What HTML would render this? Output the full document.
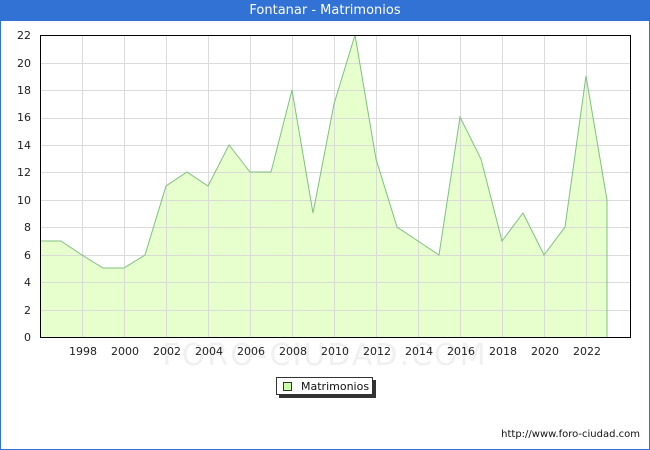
<!DOCTYPE html>
<html><head><style>
body{margin:0;width:650px;height:450px;overflow:hidden;font-family:"DejaVu Sans","Liberation Sans",sans-serif;}
.frame{position:absolute;left:0;top:0;width:648px;height:448px;border:1px solid #3272d4;background:#fff}
.title{position:absolute;left:0;top:0;width:650px;height:21px;background:#3272d4;color:#fff;font-size:13px;text-align:center;line-height:21px}
</style></head><body>
<div class="frame"></div>
<div class="title">Fontanar - Matrimonios</div>
<svg width="650" height="450" style="position:absolute;left:0;top:0" font-family="DejaVu Sans, Liberation Sans, sans-serif" font-size="11">
<polygon fill="#e6ffcc" stroke="none" points="40,337 40,241 61,241 82,255 103,268 124,268 145,255 166,186 187,172 208,186 229,145 250,172 271,172 292,90 313,213 334,104 355,35 376,159 397,227 418,241 439,255 460,117 481,159 502,241 523,213 544,255 565,227 586,76 607,200 607,337"/>
<text x="325" y="365" font-size="30" fill="#f0f0f0" text-anchor="middle" letter-spacing="2">FORO-CIUDAD.COM</text>
<g stroke="#d8d8d8" stroke-width="1" opacity="0.9">
<line x1="40" x2="630" y1="310.5" y2="310.5"/><line x1="40" x2="630" y1="282.5" y2="282.5"/><line x1="40" x2="630" y1="255.5" y2="255.5"/><line x1="40" x2="630" y1="227.5" y2="227.5"/><line x1="40" x2="630" y1="200.5" y2="200.5"/><line x1="40" x2="630" y1="172.5" y2="172.5"/><line x1="40" x2="630" y1="145.5" y2="145.5"/><line x1="40" x2="630" y1="118.5" y2="118.5"/><line x1="40" x2="630" y1="90.5" y2="90.5"/><line x1="40" x2="630" y1="63.5" y2="63.5"/>
<line x1="82.5" x2="82.5" y1="35" y2="337"/><line x1="124.5" x2="124.5" y1="35" y2="337"/><line x1="166.5" x2="166.5" y1="35" y2="337"/><line x1="208.5" x2="208.5" y1="35" y2="337"/><line x1="250.5" x2="250.5" y1="35" y2="337"/><line x1="292.5" x2="292.5" y1="35" y2="337"/><line x1="334.5" x2="334.5" y1="35" y2="337"/><line x1="376.5" x2="376.5" y1="35" y2="337"/><line x1="418.5" x2="418.5" y1="35" y2="337"/><line x1="460.5" x2="460.5" y1="35" y2="337"/><line x1="502.5" x2="502.5" y1="35" y2="337"/><line x1="544.5" x2="544.5" y1="35" y2="337"/><line x1="586.5" x2="586.5" y1="35" y2="337"/>
</g>
<polyline fill="none" stroke="#80c080" stroke-width="1" points="40,241 61,241 82,255 103,268 124,268 145,255 166,186 187,172 208,186 229,145 250,172 271,172 292,90 313,213 334,104 355,35 376,159 397,227 418,241 439,255 460,117 481,159 502,241 523,213 544,255 565,227 586,76 607,200 607,337"/>
<rect x="40.5" y="35.5" width="590" height="302" fill="none" stroke="#000" stroke-width="1"/>
<g text-anchor="end" fill="#222">
<text x="31" y="341">0</text><text x="31" y="314">2</text><text x="31" y="286">4</text><text x="31" y="259">6</text><text x="31" y="231">8</text><text x="31" y="204">10</text><text x="31" y="176">12</text><text x="31" y="149">14</text><text x="31" y="121">16</text><text x="31" y="94">18</text><text x="31" y="67">20</text><text x="31" y="39">22</text>
</g>
<g text-anchor="middle" fill="#222">
<text x="83" y="355">1998</text><text x="125" y="355">2000</text><text x="167" y="355">2002</text><text x="209" y="355">2004</text><text x="251" y="355">2006</text><text x="293" y="355">2008</text><text x="335" y="355">2010</text><text x="377" y="355">2012</text><text x="419" y="355">2014</text><text x="461" y="355">2016</text><text x="503" y="355">2018</text><text x="545" y="355">2020</text><text x="587" y="355">2022</text>
</g>
<rect x="279" y="380" width="97" height="18" fill="#333"/>
<rect x="276.5" y="377.5" width="96" height="17" fill="#fff" stroke="#333"/>
<rect x="283.5" y="382.5" width="8" height="8" fill="#ccffaa" stroke="#333"/>
<text x="301" y="390" fill="#111">Matrimonios</text>
<text x="640" y="437" font-size="10" text-anchor="end" fill="#111">http://www.foro-ciudad.com</text>
</svg>
</body></html>
